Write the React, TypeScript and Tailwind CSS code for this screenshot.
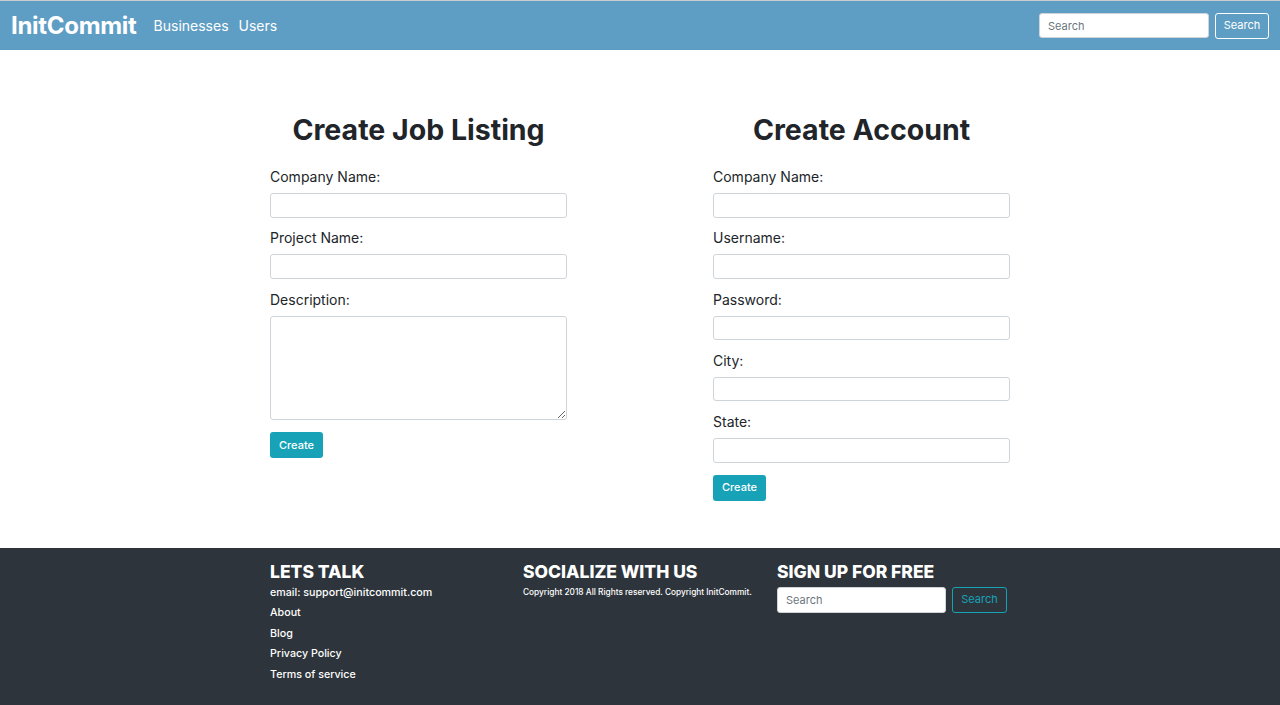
const font = { fontFamily: 'Inter, "Liberation Sans", sans-serif' }

function Field({ label, area }: { label: string; area?: boolean }) {
  return (
    <div className="flex flex-col">
      <label className="text-[14px] leading-[20px] text-[#212529] mb-[6px]">{label}</label>
      {area ? (
        <textarea className="h-[104px] w-full rounded-[3px] border border-[#ced4da] bg-white mb-[11px]" />
      ) : (
        <input className="h-[24.5px] w-full rounded-[3px] border border-[#ced4da] bg-white mb-[10.75px]" />
      )}
    </div>
  )
}

function CreateButton() {
  return (
    <button className="h-[26px] w-[53px] rounded-[3px] bg-[#17a2b8] text-[11px] font-medium text-white">
      Create
    </button>
  )
}

export default function App() {
  return (
    <div style={font} className="h-[705px] overflow-hidden flex flex-col bg-white">
      <nav className="h-[50px] shrink-0 flex items-center justify-between bg-[#5f9ec4] border-t border-[#c9ccce] px-[11px]">
        <div className="flex items-center">
          <span className="text-[24px] font-bold text-white tracking-[-0.3px]">InitCommit</span>
          <a className="ml-[17px] text-[14px] text-white">Businesses</a>
          <a className="ml-[10px] text-[14px] text-white">Users</a>
        </div>
        <div className="flex items-center gap-[6px]">
          <input
            placeholder="Search"
            className="h-[25px] w-[170px] rounded-[3px] border border-[#ced4da] bg-white px-[8px] text-[11px] placeholder:text-[#6c757d]"
          />
          <button className="h-[26px] w-[54px] rounded-[3px] border border-white text-[11px] text-white">
            Search
          </button>
        </div>
      </nav>

      <main className="shrink-0 flex justify-center gap-[146px] pt-[62px] pb-[47px]">
        <section className="w-[297px]">
          <h1 className="text-center text-[28.5px] font-bold leading-[36px] text-[#212529] mb-[19px]">
            Create Job Listing
          </h1>
          <Field label="Company Name:" />
          <Field label="Project Name:" />
          <Field label="Description:" area />
          <CreateButton />
        </section>
        <section className="w-[297px]">
          <h1 className="text-center text-[28.5px] font-bold leading-[36px] text-[#212529] mb-[19px]">
            Create Account
          </h1>
          <Field label="Company Name:" />
          <Field label="Username:" />
          <Field label="Password:" />
          <Field label="City:" />
          <Field label="State:" />
          <CreateButton />
        </section>
      </main>

      <footer className="flex-1 bg-[#2e343b] text-white">
        <div className="mx-auto flex w-[740px] pt-[13px]">
          <div className="w-[253px]">
            <h3 className="text-[17.5px] font-extrabold leading-[22px]">LETS TALK</h3>
            <ul className="text-[10.7px] font-medium leading-[20.5px]">
              <li>email: support@initcommit.com</li>
              <li>About</li>
              <li>Blog</li>
              <li>Privacy Policy</li>
              <li>Terms of service</li>
            </ul>
          </div>
          <div className="w-[254px]">
            <h3 className="text-[17.5px] font-extrabold leading-[22px]">SOCIALIZE WITH US</h3>
            <p className="text-[8.3px] font-medium leading-[18px]">
              Copyright 2018 All Rights reserved. Copyright InitCommit.
            </p>
          </div>
          <div>
            <h3 className="text-[17.5px] font-extrabold leading-[22px]">SIGN UP FOR FREE</h3>
            <div className="mt-[4px] flex gap-[6px]">
              <input
                placeholder="Search"
                className="h-[26px] w-[169px] rounded-[3px] border border-[#ced4da] bg-white px-[8px] text-[11px] text-[#495057] placeholder:text-[#6c757d]"
              />
              <button className="h-[26px] w-[55px] rounded-[3px] border border-[#17a2b8] text-[11px] text-[#17a2b8]">
                Search
              </button>
            </div>
          </div>
        </div>
      </footer>
    </div>
  )
}
